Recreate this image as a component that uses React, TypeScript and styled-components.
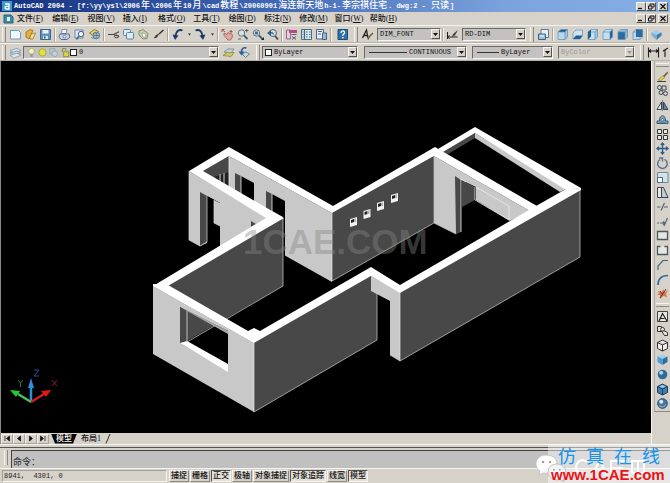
import React from "react";
import styled, { createGlobalStyle, css } from "styled-components";

const face = "#d6d2ca";
const light = "#f6f4ee";
const shade = "#8c8982";

const Global = createGlobalStyle`
  * { box-sizing: border-box; }
  html, body, #root { height: 100%; }
  body { margin: 0; overflow: hidden; background: ${face}; }
  button, select, input { font: inherit; color: inherit; margin: 0; padding: 0; border-radius: 0; }
`;

const mono = `"Liberation Mono", "Noto Sans CJK SC", monospace`;
const song = `"Liberation Serif", "Noto Sans CJK SC", serif`;

const Window = styled.div`
  position: relative;
  display: flex;
  flex-direction: column;
  height: 100vh;
  background: ${face};
  color: #222;
  font-family: ${song};
  font-size: 8px;
  line-height: 10px;
  overflow: hidden;
  white-space: nowrap;
`;

const TitleBar = styled.header`
  display: flex;
  align-items: center;
  flex: none;
  height: 12px;
  padding: 0 2px;
  gap: 2px;
  background: linear-gradient(90deg, #14307e 0%, #3f66b4 40%, #7ba2dc 75%, #86aee6 100%);
`;

const Title = styled.h1`
  flex: 1;
  margin: 0;
  font: bold 7px/12px ${mono};
  color: #fff;
  white-space: pre;
`;

const Han = styled.span`
  margin: 0 1px;
  font-size: 9px;
  font-weight: 500;
`;

const Controls = styled.div`
  display: flex;
  flex: none;
  button:last-child { margin-left: 2px; }
`;

const ControlButton = styled.button`
  display: flex;
  width: 10px;
  height: 9px;
  border: 1px solid;
  border-color: ${light} #55534e #55534e ${light};
  background: ${face};
  svg { width: 8px; height: 7px; }
`;

const MenuBar = styled.nav`
  display: flex;
  align-items: center;
  justify-content: space-between;
  flex: none;
  height: 13px;
  padding: 0 2px 0 3px;
`;

const MenuLead = styled.div`
  display: flex;
  align-items: center;
  gap: 3px;
`;

const MenuList = styled.div`
  display: grid;
  grid-template-columns: repeat(11, 1fr);
  width: 388px;
`;

const MenuItem = styled.button`
  border: 0;
  background: none;
  text-align: left;
  font-weight: 500;
  color: #111;
`;

const Bar = styled.div`
  display: flex;
  align-items: center;
  flex: none;
  height: 18px;
  border-top: 1px solid ${light};
  border-bottom: 1px solid #b5b1a9;
  overflow: hidden;
`;

const Grip = styled.span<{ $across?: boolean }>`
  flex: none;
  ${(p) =>
    p.$across
      ? css`
          width: 13px;
          height: 4px;
          margin: 2px 0 2px 1px;
          border-top: 1px solid ${light};
          border-bottom: 1px solid ${shade};
        `
      : css`
          width: 4px;
          height: 15px;
          margin: 0 2px;
          border-left: 1px solid ${light};
          border-right: 1px solid ${shade};
        `}
`;

const Separator = styled.span`
  flex: none;
  width: 2px;
  height: 13px;
  margin: 0 1px;
  border-left: 1px solid #aaa69e;
  border-right: 1px solid ${light};
`;

const Spacer = styled.span<{ $w: number }>`
  flex: none;
  width: ${(p) => p.$w}px;
`;

const ToolButton = styled.button`
  display: flex;
  align-items: center;
  justify-content: center;
  flex: none;
  width: 15px;
  height: 14px;
  border: 0;
  background: none;
  svg { width: 13px; height: 13px; flex: none; }
`;

const HistoryButton = styled(ToolButton)`
  width: 8px;
`;

const Combo = styled.label<{ $w: number; $off?: boolean }>`
  display: flex;
  align-items: center;
  flex: none;
  width: ${(p) => p.$w}px;
  height: 13px;
  padding-left: 2px;
  border: 1px solid;
  border-color: #6b6963 ${light} ${light} #6b6963;
  background: ${(p) => (p.$off ? "#cfccc4" : "#c3c2c0")};
  color: ${(p) => (p.$off ? "#a09d96" : "#111")};
  font: 7px/11px ${mono};
  svg { flex: none; }
  select {
    flex: 1;
    min-width: 0;
    width: 0;
    height: 11px;
    border: 0;
    background: transparent;
    appearance: none;
    outline: 0;
    opacity: 1;
  }
`;

const ComboArrow = styled.span`
  display: flex;
  align-items: center;
  justify-content: center;
  flex: none;
  width: 9px;
  height: 10px;
  border: 1px solid;
  border-color: ${light} #55534e #55534e ${light};
  background: ${face};
  pointer-events: none;
`;

const LineSample = styled.span<{ $w: number }>`
  flex: none;
  width: ${(p) => p.$w}px;
  height: 1px;
  margin: 0 2px;
  background: #333;
`;

const Swatch = styled.span`
  flex: none;
  width: 7px;
  height: 7px;
  margin-right: 2px;
  border: 1px solid #222;
  background: #fff;
`;

const Workspace = styled.main`
  display: flex;
  flex: 1;
  min-height: 0;
`;

const Document = styled.section`
  display: flex;
  flex-direction: column;
  flex: 1;
  min-width: 0;
  border-left: 1px solid ${shade};
  border-right: 1px solid ${light};
`;

const Viewport = styled.div`
  flex: 1;
  min-height: 0;
  background: #000;
  svg { display: block; width: 100%; height: 100%; }
`;

const SheetTabs = styled.div`
  display: flex;
  align-items: center;
  flex: none;
  height: 11px;
`;

const NavButton = styled.button`
  display: flex;
  align-items: center;
  justify-content: center;
  width: 12px;
  height: 10px;
  border: 1px solid;
  border-color: ${light} #a5a29a #a5a29a ${light};
  background: ${face};
  svg { width: 8px; height: 7px; }
`;

const SheetTab = styled.button<{ $active?: boolean }>`
  width: ${(p) => (p.$active ? 26 : 28)}px;
  height: 10px;
  margin-left: ${(p) => (p.$active ? 2 : 0)}px;
  border: 0;
  line-height: 10px;
  font-weight: 500;
  clip-path: ${(p) => (p.$active ? "polygon(0 0, 100% 0, calc(100% - 4px) 100%, 4px 100%)" : "none")};
  background: ${(p) => (p.$active ? "#000" : "none")};
  color: ${(p) => (p.$active ? "#fff" : "#111")};
`;

const SidePanel = styled.aside`
  display: flex;
  flex-direction: column;
  flex: none;
  width: 18px;
  padding-left: 2px;
`;

const Dock = styled.div`
  display: flex;
  flex-direction: column;
  flex: none;
  border-left: 1px solid #b0aca4;
  border-bottom: 1px solid ${shade};
`;

const ToolStack = styled.div<{ $h: number }>`
  display: grid;
  grid-auto-rows: 1fr;
  align-items: center;
  height: ${(p) => p.$h}px;
`;

const CommandArea = styled.form`
  display: flex;
  flex: none;
  height: 25px;
  border-top: 1px solid ${light};
  padding-top: 2px;
`;

const CommandFrame = styled.div`
  display: flex;
  flex: 1;
  border-top: 1px solid #55534e;
  padding: 2px 0 0 2px;
  border-bottom: 1px solid ${light};
`;

const CommandBox = styled.label`
  display: flex;
  align-items: flex-end;
  flex: 1;
  margin-left: 1px;
  border-left: 1px solid #44423e;
  border-top: 1px solid #44423e;
  background: #c0c0c0;
  font: 9px/11px ${song};
  padding-left: 1px;
  input {
    flex: 1;
    border: 0;
    height: 11px;
    outline: 0;
    background: transparent;
  }
`;

const StatusBar = styled.footer`
  display: flex;
  align-items: center;
  gap: 1px;
  flex: none;
  height: 14px;
  padding: 0 2px;
`;

const Coordinates = styled.output`
  width: 165px;
  height: 12px;
  margin-right: 1px;
  padding-left: 1px;
  border: 1px solid;
  border-color: #a29f97 ${light} ${light} #a29f97;
  white-space: pre;
  font: 7px/11px ${mono};
`;

const Toggle = styled.button<{ $wide?: boolean }>`
  width: ${(p) => (p.$wide ? 36 : 20)}px;
  height: 12px;
  border: 1px solid;
  border-color: ${light} #8c8982 #8c8982 ${light};
  background: ${face};
  line-height: 10px;
  font-weight: 500;
  color: #111;
  &[aria-pressed="true"] {
    border-color: #55534e ${light} ${light} #55534e;
    background: #e4e1da;
  }
`;

const Badge = styled.div`
  position: absolute;
  right: 0;
  bottom: 0;
  display: flex;
  flex-direction: column;
  align-items: flex-start;
  width: 122px;
  height: 39px;
  padding-left: 3px;
  background: rgba(255, 255, 255, 0.45);
`;

const BadgeLogo = styled.div`
  position: absolute;
  left: -13px;
  top: 9px;
  svg { display: block; width: 124px; height: 30px; }
`;

const BadgeName = styled.div`
  position: relative;
  display: flex;
  gap: 10px;
  padding-left: 7px;
  font: 18px/22px "Noto Sans CJK SC", sans-serif;
  color: #1496f0;
`;

const BadgeLink = styled.a`
  position: relative;
  font: bold 15px/17px "Liberation Sans", sans-serif;
  color: #e8141c;
  text-decoration: none;
`;

type Draw = React.ReactNode;
const ink = "#3b4652";
const blue = "#3f7fb4";
const pale = "#dcecf6";

const lens = (
  <>
    <circle cx="5.500" cy="5" r="3.200" fill="#d3e2ea" stroke="#66727c" />
    <path d="M8 7.500l3.500 3.500" stroke="#3c5c80" strokeWidth="1.800" />
  </>
);

const cube = (top: string, left: string, right: string) => (
  <>
    <path d="M2 4L5 1.500H11.500L9 4Z" fill={top} />
    <path d="M2 4H9V11.500H2Z" fill={left} />
    <path d="M9 4L11.500 1.500V9L9 11.500Z" fill={right} />
    <path d="M2 4L5 1.500H11.500V9L9 11.500H2ZM2 4H9V11.500M9 4L11.500 1.500" fill="none" stroke="#5d8fb8" strokeWidth=".7" />
  </>
);

const icons: Record<string, Draw> = {
  new: <path d="M1.500 2.500h8l2 2v6.500h-10z" fill="#edf6fa" stroke="#6f9bb5" />,
  open: (
    <>
      <path d="M2 4l4-2.500 3 1-4 8.500-3-2z" fill="#e2b23a" stroke="#94701e" strokeWidth=".8" />
      <path d="M6 11c0-4 1-5.500 5.500-6l-2.500 6z" fill="#f4dc82" stroke="#94701e" strokeWidth=".7" />
    </>
  ),
  save: (
    <>
      <path d="M1.500 1.500h10v10h-10z" fill="#5f93bf" stroke="#3b6790" />
      <path d="M3.500 2h6v3.500h-6z" fill="#e9f1f5" />
      <path d="M4 8h5v3H4z" fill="#d5e3ea" />
      <path d="M5 8.500h1.500v2H5z" fill="#345" />
    </>
  ),
  print: (
    <>
      <path d="M4 1.500h5l-1 4H3.500z" fill="#eef4fa" stroke="#6878a0" strokeWidth=".8" />
      <path d="M2 6h9l1 3-3 2.500H3L1 9z" fill="#c9d3ea" stroke="#50608c" strokeWidth=".9" />
      <circle cx="6.500" cy="8.700" r="1.400" fill="#eef" stroke="#50608c" strokeWidth=".7" />
    </>
  ),
  preview: (
    <>
      <path d="M2 2h8v8H2z" fill="#dbe9f7" stroke="#5b7ea8" strokeWidth=".9" />
      <circle cx="8" cy="6" r="2.700" fill="#eaf4fb" stroke="#4b6488" />
      <path d="M6 8l-2.500 3.500" stroke="#4b6488" strokeWidth="1.500" />
    </>
  ),
  publish: (
    <>
      <path d="M1.500 5l5-3.500 4 2-4 5z" fill="#e8cf5c" stroke="#7b6b26" strokeWidth=".8" />
      <circle cx="8.300" cy="7.500" r="3.300" fill="#9cc4d6" stroke="#49637c" strokeWidth=".9" />
      <path d="M6 7.500h5M8.300 5v5M3 9l2.500 2" stroke="#49637c" strokeWidth=".7" />
    </>
  ),
  cut: (
    <>
      <path d="M1 6.500h6M7 6.300l5-2.500M7 6.600l5 1.500" stroke="#444" strokeWidth="1.100" />
      <ellipse cx="9.500" cy="8.500" rx="2.200" ry="1.200" fill="none" stroke="#444" />
    </>
  ),
  copy: (
    <>
      <rect x="1.500" y="1.500" width="7" height="6" rx="1" fill={pale} stroke="#5585a3" />
      <rect x="4.500" y="4.500" width="7" height="6.500" rx="1" fill={pale} stroke="#5585a3" />
    </>
  ),
  paste: (
    <>
      <path d="M2 3l4-1.500 5 4-1 5-4 .5-4-4z" fill="#c9cfa4" stroke="#85906d" />
      <path d="M5 4.500l4 2-.5 3-3-.5z" fill="#eef2f0" stroke="#8a9a9a" strokeWidth=".7" />
    </>
  ),
  brush: (
    <>
      <path d="M11.500 2L7 6" stroke="#333" strokeWidth="1.500" />
      <path d="M7.500 5.500L5 9.500l-3.500 1L4 7z" fill="#4a3a2c" />
    </>
  ),
  undo: (
    <>
      <path d="M11.500 2.500C8 1 5 3 4.500 8" fill="none" stroke="#173a68" strokeWidth="1.900" />
      <path d="M1.500 6.500l6 1L4 12z" fill="#173a68" />
    </>
  ),
  redo: (
    <>
      <path d="M1.500 2.500C5 1 8 3 8.500 8" fill="none" stroke="#173a68" strokeWidth="1.900" />
      <path d="M11.500 6.500l-6 1L9 12z" fill="#173a68" />
    </>
  ),
  dot: <path d="M5 5.500h3L6.500 7.500z" fill="#222" />,
  pan: (
    <>
      <path d="M3 5l3 1.500 1-2 2 1 2 .5.5 3-2 3H7L3 7.500z" fill="#e0a8a0" stroke="#a8665e" strokeWidth=".9" />
      <path d="M1 1.500l3 2.500M1 1.500v2.500M1 1.500h2.500M10 2v3M8.500 3.500h3" stroke="#a84a50" />
    </>
  ),
  zoom: (
    <>
      {lens}
      <path d="M9 2.500h3.500M10.700 1v3.300M2 11h3" stroke="#555" strokeWidth=".9" />
    </>
  ),
  zoomWindow: (
    <>
      {lens}
      <path d="M4 3.500h3v3H4z" fill="#3f6f98" />
      <path d="M10 12h3v-3z" fill="#222" />
    </>
  ),
  zoomPrevious: (
    <>
      <circle cx="7" cy="5" r="3.500" fill="#cfdfe8" stroke="#56626e" />
      <path d="M9 8l3 3.500" stroke="#444" strokeWidth="1.800" />
      <path d="M1 5l4-3v2c2 0 3 1 3 3-1-1.500-2-1.500-3-1.500V8z" fill="#2c5c90" />
    </>
  ),
  properties: (
    <>
      <path d="M1.500 2h4v9h-4z" fill="#e4cfe0" stroke="#8a4a80" strokeWidth=".8" />
      <path d="M4 2h8v3H4z" fill="#b04c88" />
      <path d="M6.500 6.500h5M7 8.500l4 3M11 8.500l-4 3" stroke="#665a70" />
    </>
  ),
  design: (
    <>
      <path d="M1.500 1.500h10v10h-10z" fill="#dce9ec" stroke="#4a6c84" />
      <path d="M4.500 2v9M6 4h1.500M9 4h1.500M6 6.500h1.500M9 6.500h1.500M6 9h1.500M9 9h1.500M2.500 4h1M2.500 6.500h1M2.500 9h1" stroke="#3a6c8a" strokeWidth="1.200" />
    </>
  ),
  palettes: (
    <>
      <path d="M1.500 1.500h7v9.500h-7z" fill="#e4eef7" stroke="#4c6288" />
      <path d="M3 3.500h4M3 6h3M7.500 5h4v6.500h-4z" fill="#9cb6d6" stroke="#4c6288" />
    </>
  ),
  help: (
    <>
      <path d="M2 1.500h9.500v10H2z" fill="#2f70a8" stroke="#1b4c78" />
      <path d="M5 5c0-3 4-2.500 3.500-.2C8.300 6 6.800 6 6.800 7.800M6.800 9v1.400" fill="none" stroke="#fff" strokeWidth="1.300" />
    </>
  ),
  textStyle: (
    <>
      <path d="M1.500 10L5.500 2l1.500 8M3 7.500h4" fill="none" stroke="#222" strokeWidth="1.300" />
      <path d="M12 5l-4 4-1 2.500" fill="none" stroke="#6c5a2a" strokeWidth="1.400" />
    </>
  ),
  dimStyle: (
    <>
      <path d="M1.500 4v7M1.500 9h10M3.500 7.500L1.500 9l2 1.500" fill="none" stroke="#222" />
      <path d="M12 2L7 6l-1 3 3-1.500z" fill="#4c473e" />
    </>
  ),
  views: (
    <>
      <path d="M4 1.500h7.500v8H4z" fill="#e8f1f7" stroke="#607890" />
      <path d="M1.500 6h7v5.500h-7z" fill="#9fc0d8" stroke="#3e6284" />
      <path d="M3 8h4" stroke="#fff" />
    </>
  ),
  top: cube("#1f5d94", "#b9d8ec", "#9cc5e0"),
  bottom: (
    <>
      <path d="M2 5L5 2h6.500v6L9 11H2z" fill="#cfe3ef" stroke="#5d8fb8" strokeWidth=".7" />
      <path d="M2 11l3-3.500h6.500L9 11z" fill="#1f5d94" />
    </>
  ),
  left: (
    <>
      {cube("#c4dff0", "#c4dff0", "#9cc5e0")}
      <path d="M2 4l3-2.500v7L2 11.500z" fill="#1f5d94" />
    </>
  ),
  right: cube("#c4dff0", "#c4dff0", "#1f5d94"),
  front: cube("#8dbbdc", "#2a6ba2", "#8dbbdc"),
  back: (
    <>
      {cube("#bcd9ec", "#bcd9ec", "#bcd9ec")}
      <path d="M5 1.500h6.500V9H5z" fill="#2a6ba2" />
    </>
  ),
  iso: (
    <>
      <path d="M1.500 4.500L6.500 2l5 2.500v3L6.500 12l-5-4.500z" fill="#a6cce4" />
      <path d="M6.500 7l5-2.500v3L6.500 12z" fill="#3c7eb0" />
      <path d="M1.500 4.500L6.500 7v5l-5-4.500z" fill="#7bb0d4" />
    </>
  ),
  layers: (
    <>
      <path d="M1 4.500L8 2.500l4 2-7 2.500z" fill="#dbe8ee" stroke="#76909e" strokeWidth=".7" />
      <path d="M1 7L8 5l4 2-7 2.500z" fill="#c3d7e1" stroke="#76909e" strokeWidth=".7" />
      <path d="M1 9.300l7-2 4 2L5 12z" fill="#dbe8ee" stroke="#76909e" strokeWidth=".7" />
    </>
  ),
  layerCurrent: (
    <>
      <path d="M1 9.500l4-3h7l-3 4z" fill="#dccb5a" stroke="#8c8236" strokeWidth=".8" />
      <path d="M2 6l4-3h6l-3 4z" fill="#c0d6cf" stroke="#71898f" strokeWidth=".8" />
    </>
  ),
  layerPrevious: (
    <>
      <path d="M5 8l4-2 3.500 2-4 3.500z" fill="#c5dae8" stroke="#4c6c8c" strokeWidth=".8" />
      <path d="M9.500 2C6 1 4.500 3 4.500 6" fill="none" stroke="#2f5f96" strokeWidth="1.700" />
      <path d="M1.500 5.500h6L4.500 9.500z" fill="#2f5f96" />
    </>
  ),
  dimLinear: <path d="M1.500 1.500v10M11.500 1.500v10M2 5h9M4 3.500L2 5l2 1.500M9 3.500L11 5 9 6.500" fill="none" stroke="#222" strokeWidth="1.100" />,
  dimAligned: <path d="M1 5l5-3M1 5l3 0M3 6v5M9 2v5" fill="none" stroke="#222" strokeWidth="1.200" />,
  erase: (
    <>
      <path d="M1 11.500h9" stroke="#444" />
      <path d="M11.500 1.500L7 6l1.500 1L12 3z" fill="#6c5a3c" />
      <path d="M6.500 6L2 10l3 .5 4-3.500z" fill="#e6d34c" stroke="#7c7430" strokeWidth=".6" />
    </>
  ),
  duplicate: (
    <g fill="none" stroke={ink}>
      <circle cx="3.500" cy="3.500" r="2" />
      <path d="M6 2h4v4H6z" />
      <circle cx="5" cy="8.500" r="2" />
      <circle cx="9.500" cy="9.500" r="2" />
    </g>
  ),
  mirror: (
    <>
      <path d="M5.500 3v7.500H1z" fill="#e8edf0" stroke={ink} />
      <path d="M7.500 3v7.500H12z" fill="#5f88a8" stroke={ink} />
      <path d="M6.500 1v11" stroke={ink} strokeWidth=".6" />
    </>
  ),
  offset: (
    <>
      <path d="M1 10.500h11V8H9.500C10 1 3 1 3.500 8H1z" fill="#82a6bf" stroke="#3c5b74" />
      <path d="M3 10h7M5 8c0-3.500 3-3.500 3 0z" fill="#dbe8ee" stroke="#3c5b74" strokeWidth=".8" />
    </>
  ),
  array: <path d="M1.500 1.500h4v4h-4zM7.500 1.500h4v4h-4zM1.500 7.500h4v4h-4zM7.500 7.500h4v4h-4z" fill="#ece9e2" stroke="#333" />,
  move: <path d="M6.500 1v11M1 6.500h11M4.800 3l1.700-2 1.700 2M4.800 10l1.700 2 1.700-2M3 4.800L1 6.500l2 1.700M10 4.800l2 1.700-2 1.700" fill="none" stroke="#2d5e90" strokeWidth="1.300" />,
  rotate: <path d="M4 2.500A4.800 4.800 0 1 0 8.500 2.300M3 1h3.500v3.500" fill="none" stroke="#55738c" strokeWidth="1.400" />,
  scale: (
    <>
      <path d="M1.500 1.500h10.500v10H1.500z" fill="#d3e2e8" stroke="#6b909c" />
      <path d="M1.500 6.500h5v5h-5z" fill="#fff" stroke="#47707c" />
    </>
  ),
  stretch: (
    <>
      <path d="M1.500 1.500h4v10h-4z" fill="#ece9e2" stroke={ink} />
      <path d="M5.500 1.500h2l4.500 10H5.500z" fill="#b8ced8" stroke={ink} />
    </>
  ),
  trim: <path d="M1 7h3.500M8 7h4M8.500 3L5 10.500" stroke="#556472" strokeWidth="1.200" />,
  extend: <path d="M1 8h2M4 8h5M11.500 3L8 11M7 6.500L9 8 7 9.500" fill="none" stroke="#556472" strokeWidth="1.200" />,
  breakPoint: <path d="M1.500 2.500h10v8h-10z" fill="#e8e6df" stroke="#4a5862" strokeWidth="1.300" />,
  breakGap: <path d="M4.500 2.500h-3v8h10v-8h-3" fill="#e8e6df" stroke="#4a5862" strokeWidth="1.300" />,
  chamfer: <path d="M2 12V8L7 2.500h5" fill="none" stroke="#4b6276" strokeWidth="1.200" />,
  fillet: <path d="M2 12C2 6 5 2.500 12 2.500" fill="none" stroke="#2f6c9c" strokeWidth="1.600" />,
  explode: (
    <>
      <path d="M2 4l4 1 1-3 2 3 3-2-2 4 1 3-4-1-3 3V8L1 8l2-2z" fill="#d87848" />
      <path d="M4 11l6-9M4 4l3 4" stroke="#6c3030" />
    </>
  ),
  textWindow: (
    <>
      <path d="M1.500 1.500h10v10h-10z" fill="#e8e6df" stroke="#444" />
      <path d="M3 11l3.500-7.500L11 11M4.500 8.500h4" fill="none" stroke="#222" strokeWidth="1.200" />
    </>
  ),
  wire2: (
    <g fill="#e8e6df" stroke="#333">
      <path d="M1.500 2.500h4v5h-4z" />
      <circle cx="6.500" cy="5.500" r="2" />
      <path d="M5.500 7h3l3 1.500v3h-3z" />
    </g>
  ),
  wire3: <path d="M6.500 1l5 2.500v6l-5 2.500-5-2.500v-6zM1.500 3.500l5 2.500 5-2.500M6.500 6v6" fill="#efede8" stroke="#333" />,
  hidden: (
    <>
      <path d="M1.500 3.500L6.500 1.500l5 2-5 2.500z" fill="#9ed0ee" />
      <path d="M1.500 3.500l5 2.500v6l-5-3z" fill="#4a9bd0" />
      <path d="M11.500 3.500l-5 2.500v6l5-3z" fill="#2670a8" />
    </>
  ),
  flat: (
    <>
      <circle cx="6.500" cy="6.500" r="4.800" fill="#2e6b98" />
      <circle cx="5.200" cy="4.800" r="2" fill="#a8d2ea" />
    </>
  ),
  flatEdges: (
    <>
      <path d="M6.500 1l5 2.500v6l-5 2.500-5-2.500v-6z" fill={blue} stroke="#1c3f5e" />
      <path d="M1.500 3.500l5 2.500 5-2.500M6.500 6v6" fill="none" stroke="#1c3f5e" />
      <path d="M3 3.500l3.500-1.500L10 3.500 6.500 5z" fill="#a7cbe2" />
    </>
  ),
  gouraud: (
    <>
      <circle cx="6.500" cy="6.500" r="4.800" fill="#4678a4" stroke="#25486c" />
      <path d="M3 8.500c2 2 5 2 7-1" fill="none" stroke="#b8d0e4" strokeWidth=".8" />
      <circle cx="5.200" cy="4.800" r="2" fill="#d6e8f4" />
    </>
  ),
  bulb: (
    <>
      <circle cx="6.500" cy="5" r="3.300" fill="#f5f4c0" stroke="#a6a468" strokeWidth=".8" />
      <path d="M5 8.500h3v3H5z" fill="#8e969c" />
    </>
  ),
  sun: <circle cx="6.500" cy="6.500" r="4.300" fill="#dfe23a" stroke="#a3a63a" strokeWidth="1" />,
  freeze: (
    <>
      <path d="M2 2h6v6H2z" fill="#b9c6cb" stroke="#94a4ac" />
      <circle cx="8" cy="8" r="3.300" fill="#c3d2d6" stroke="#8fa4ae" />
    </>
  ),
  lock: (
    <>
      <path d="M4 6V3c0-2 4-2 4 0v1" fill="none" stroke="#8a8a3a" strokeWidth="1.200" />
      <path d="M5.500 5.500h6v6h-6z" fill="#d9d547" stroke="#86843a" />
    </>
  ),
};

const Glyph = ({ name, size }: { name: string; size?: number }) => (
  <svg viewBox="0 0 13 13" width={size} height={size} fill="none" aria-hidden="true">
    {icons[name]}
  </svg>
);

const Tools = ({ names }: { names: string[] }) => (
  <>
    {names.map((n) => (
      <ToolButton key={n} type="button" aria-label={n}>
        <Glyph name={n} />
      </ToolButton>
    ))}
  </>
);

const Picker = ({ label, value, width, off, children }: { label: string; value: string; width: number; off?: boolean; children?: React.ReactNode }) => (
  <Combo $w={width} $off={off}>
    {children}
    <select aria-label={label} disabled={off} defaultValue={value}>
      <option>{value}</option>
    </select>
    <ComboArrow>
      <svg width="5" height="3" viewBox="0 0 5 3" aria-hidden="true">
        <path d="M0 0h5L2.500 3z" fill={off ? "#a09d96" : "#111"} />
      </svg>
    </ComboArrow>
  </Combo>
);

const WindowControls = () => (
  <Controls>
    <ControlButton type="button" aria-label="Minimize">
      <svg viewBox="0 0 8 7"><path d="M1 5.500h4" stroke="#111" strokeWidth="1.300" /></svg>
    </ControlButton>
    <ControlButton type="button" aria-label="Restore">
      <svg viewBox="0 0 8 7"><path d="M3 3V1h4v3H5.500M1.500 3h3.500v3H1.500z" fill="none" stroke="#111" /></svg>
    </ControlButton>
    <ControlButton type="button" aria-label="Close">
      <svg viewBox="0 0 8 7"><path d="M1.500 1l5 5M6.500 1l-5 5" stroke="#111" strokeWidth="1.200" /></svg>
    </ControlButton>
  </Controls>
);

const AppIcon = () => (
  <svg width="10" height="10" viewBox="0 0 10 10" aria-hidden="true">
    <rect width="10" height="10" fill="#3c9ac4" />
    <path d="M3 3h4v5H4.500C2.500 8 2.500 5.300 4.500 5.300H7" fill="none" stroke="#fff" strokeWidth="1.300" />
  </svg>
);

const DrawingIcon = () => (
  <svg width="11" height="11" viewBox="0 0 11 11" aria-hidden="true">
    <path d="M1 2h7l2 2v6H1z" fill="#3b8ca8" stroke="#2c5c70" />
    <path d="M4 4h3v4H4z" fill="#e4f2f6" />
  </svg>
);

const menus = [
  ["文件", "F"], ["编辑", "E"], ["视图", "V"], ["插入", "I"], ["格式", "O"], ["工具", "T"],
  ["绘图", "D"], ["标注", "N"], ["修改", "M"], ["窗口", "W"], ["帮助", "H"],
];

const toggles: [string, boolean][] = [
  ["捕捉", false], ["栅格", false], ["正交", true], ["极轴", false],
  ["对象捕捉", false], ["对象追踪", true], ["线宽", false], ["模型", true],
];

const navs = [
  "M2 1v5M6.500 1v5L3.500 3.500z",
  "M5.500 1v5L2.500 3.500z",
  "M2.500 1v5l3-2.500z",
  "M6 1v5M1.500 1v5l3-2.500z",
];

const HousePlan = () => {
  const W = "#fff";
  const L = "#c8c8c8";
  const D = "#484848";
  return (
    <svg viewBox="1 61 650 372" preserveAspectRatio="xMinYMin slice" role="img" aria-label="House model">
      {/* terrace */}
      <path d="M443 152L475 133V138L448 154Z" fill={D} />
      <path d="M475 133L566 189L560 192L475 138Z" fill={L} />
      <path d="M438 149L475 127L581 188L566 190L475 133L443 152Z" fill={W} />
      {/* living room end wall */}
      <path d="M434 156L530 211L510 221L476 200V187L461 180V231L456 234L434 223Z" fill={L} />
      <path d="M455 176L461 180V232L456 234Z" fill={D} />
      <path d="M462 180L475 187V200L462 207Z" fill={D} />
      <path d="M461 232V179L466 182M476 187L509 206V220M475 187V200L509 220" fill="none" stroke="#eee" strokeWidth=".8" />
      <path d="M434 223L456 234" stroke="#ddd" strokeWidth=".6" />
      {/* long wall */}
      <path d="M332 213L434 156V223L332 281Z" fill={D} />
      <path d="M332 281L434 223V156" fill="none" stroke="#bbb" strokeWidth=".8" />
      {[[350, 217], [363.500, 209], [377, 201], [391, 193]].map(([x, y]) => (
        <g key={x}>
          <path d={`M${x} ${y + 2}l7-2v8l-7 2z`} fill="#f2f2f2" />
          <path d={`M${x + 1} ${y + 3}l3-1v3l-3 1z`} fill="#222" />
          <path d={`M${x + 4} ${y + 2}l2-1v4h-2z`} fill="#b0b0b0" />
        </g>
      ))}
      {/* upper left room */}
      <path d="M229 156L332 213V282L284 255V218Z" fill={L} />
      <path d="M203 171L229 156V188Z" fill={D} />
      <path d="M214 177L229 172V187Z" fill="#222" />
      <path d="M220 174V184M224 173V186" stroke="#999" strokeWidth="1.500" />
      <path d="M229 156V188L284 219V200Z" fill={L} />
      <path d="M241 176L254 183V202L241 194Z" fill="#000" />
      <path d="M235 173L241 176V194L235 190Z" fill={D} />
      <path d="M266 191L272 194V212L266 208Z" fill={D} />
      <path d="M272 194L285 201V256H283V217L272 211Z" fill="#000" />
      <path d="M241 176V194M272 194V211M229 156V186" stroke="#eee" strokeWidth=".8" />
      <path d="M189 171L267 218L220 247V203L207 196V243L200 246L189 240Z" fill={L} />
      <path d="M200 192L207 196V242L200 246Z" fill={D} />
      <path d="M207 196L220 203V246L207 242Z" fill="#000" />
      <path d="M214 200L220 203V226L214 223Z" fill={L} />
      <path d="M214 200V223L220 226M207 196V242L200 246L189 240V171" fill="none" stroke="#ddd" strokeWidth=".7" />
      <path d="M251 221L256 224L251 227Z" fill={D} />
      {/* left lower room, rear wall */}
      <path d="M283 218V286L168 352V286Z" fill={D} />
      <path d="M283 218V286L170 352" fill="none" stroke="#bbb" strokeWidth=".8" />
      <path fillRule="evenodd" d="M189 171L229 147L333 206L435 147L537 206L530 211L434 156L332 213L229 156L203 171L284 218L168 286L254 335V343L153 286L266 218Z" fill={W} />
      {/* front left face with window */}
      <path fillRule="evenodd" d="M153 286L254 343V412L153 354ZM180 307V343L228 371V331Z" fill={L} />
      <path d="M180 307L187 311V341L180 343Z" fill={D} />
      <path d="M180 307L228 331V334L187 311Z" fill="#aaa" />
      <path d="M187 341L228 364V372L180 343Z" fill={W} />
      <path d="M187 311V341" stroke="#ddd" strokeWidth=".8" />
      {/* front right face */}
      <path d="M254 343L371 276L377 281V340L254 412Z" fill={D} />
      <path d="M377 292V340L254 412" fill="none" stroke="#bbb" strokeWidth=".8" />
      <path d="M371 276L400 292V361L390 355V301L371 291Z" fill={L} />
      <path d="M400 292L580 189V257L400 361Z" fill={D} />
      <path d="M580 189V257L400 361L390 355" fill="none" stroke="#bbb" strokeWidth=".8" />
      <path d="M168 285L248 331L254 328L260 331L371 267L400 285L536 206L566 189L581 188V190L400 293L371 276L254 343L153 286V284Z" fill={W} />
      <path d="M254 343V412M400 293V361M332 213V281" stroke="#e4e4e4" strokeWidth=".7" />
      <text x="243" y="254" fill="#858585" fillOpacity=".42" fontFamily="Liberation Sans, sans-serif" fontWeight="bold" fontSize="35">1CAE.COM</text>
      {/* axis tripod */}
      <g strokeWidth="2.500">
        <path d="M31 402V385" stroke="#2f8fd8" />
        <path d="M31 402L18 394" stroke="#49c455" />
        <path d="M31 402L44 394" stroke="#d42020" />
      </g>
      <path d="M31 378L34 388H28Z" fill="#2f8fe0" />
      <path d="M10 390L20 391L16 397Z" fill="#22cc33" />
      <path d="M51 390L41 391L46 397Z" fill="#e41818" />
      <g fill="none" strokeWidth="1">
        <path d="M34 370H39L34 376H39" stroke="#304a98" />
        <path d="M18 380L20.500 383L23 380M20.500 383V387" stroke="#2c8030" />
        <path d="M52 380L57 386M57 380L52 386" stroke="#882030" />
      </g>
    </svg>
  );
};

export default function App() {
  return (
    <Window>
      <Global />
      <TitleBar>
        <AppIcon />
        <Title>
          AutoCAD 2004 - [f:\yy\ysl\2006<Han>年</Han>\2006<Han>年</Han>10<Han>月</Han>\cad<Han>教程</Han>\20060901<Han>海连新天地</Han>h-1-<Han>李宗祺住宅</Han>. dwg:2 - <Han>只读</Han>]
        </Title>
        <WindowControls />
      </TitleBar>

      <MenuBar>
        <MenuLead>
          <DrawingIcon />
          <MenuList>
            {menus.map(([name, key]) => (
              <MenuItem key={key} type="button">
                {name}(<u>{key}</u>)
              </MenuItem>
            ))}
          </MenuList>
        </MenuLead>
        <WindowControls />
      </MenuBar>

      <Bar role="toolbar" aria-label="Standard">
        <Grip />
        <Tools names={["new", "open", "save"]} />
        <Separator />
        <Tools names={["print", "preview", "publish"]} />
        <Separator />
        <Tools names={["cut", "copy", "paste", "brush"]} />
        <Separator />
        <Tools names={["undo"]} />
        <HistoryButton type="button" aria-label="Undo list"><Glyph name="dot" /></HistoryButton>
        <Tools names={["redo"]} />
        <HistoryButton type="button" aria-label="Redo list"><Glyph name="dot" /></HistoryButton>
        <Separator />
        <Tools names={["pan", "zoom", "zoomWindow", "zoomPrevious"]} />
        <Separator />
        <Tools names={["properties", "design", "palettes"]} />
        <Separator />
        <Spacer $w={2} />
        <Tools names={["help"]} />
        <Spacer $w={2} />
        <Grip />
        <Tools names={["textStyle"]} />
        <Spacer $w={2} />
        <Picker label="Text style" value="DIM_FONT" width={64} />
        <Separator />
        <Tools names={["dimStyle"]} />
        <Spacer $w={2} />
        <Picker label="Dimension style" value="RD-DIM" width={64} />
        <Spacer $w={2} />
        <Grip />
        <Tools names={["views"]} />
        <Separator />
        <Tools names={["top", "bottom", "left", "right", "front", "back"]} />
        <Separator />
        <Tools names={["iso"]} />
      </Bar>

      <Bar role="toolbar" aria-label="Layers and properties">
        <Grip />
        <Tools names={["layers"]} />
        <Picker label="Layer" value="0" width={196}>
          <Glyph name="bulb" size={11} />
          <Glyph name="sun" size={11} />
          <Glyph name="freeze" size={11} />
          <Glyph name="lock" size={11} />
          <Swatch />
        </Picker>
        <Spacer $w={2} />
        <Tools names={["layerCurrent", "layerPrevious"]} />
        <Spacer $w={3} />
        <Grip />
        <Picker label="Color" value="ByLayer" width={96}>
          <Swatch />
        </Picker>
        <Spacer $w={6} />
        <Picker label="Linetype" value="CONTINUOUS" width={103}>
          <LineSample $w={38} />
        </Picker>
        <Spacer $w={5} />
        <Picker label="Lineweight" value="ByLayer" width={81}>
          <LineSample $w={22} />
        </Picker>
        <Spacer $w={5} />
        <Picker label="Plot style" value="ByColor" width={77} off />
        <Spacer $w={3} />
        <Grip />
        <Tools names={["dimLinear", "dimAligned"]} />
      </Bar>

      <Workspace>
        <Document>
          <Viewport>
            <HousePlan />
          </Viewport>
          <SheetTabs>
            {navs.map((d, i) => (
              <NavButton key={d} type="button" aria-label={["First", "Previous", "Next", "Last"][i]}>
                <svg viewBox="0 0 8 7"><path d={d} fill="#111" stroke="#111" strokeWidth=".7" /></svg>
              </NavButton>
            ))}
            <SheetTab type="button" $active>模型</SheetTab>
            <SheetTab type="button">布局1</SheetTab>
            <svg width="6" height="10" viewBox="0 0 6 10" aria-hidden="true"><path d="M5 0L1 9.500" stroke="#333" /></svg>
          </SheetTabs>
        </Document>
        <SidePanel>
          <Dock>
            <Grip $across />
            <ToolStack $h={232}>
              <Tools names={["erase", "duplicate", "mirror", "offset", "array", "move", "rotate", "scale", "stretch", "trim", "extend", "breakPoint", "breakGap", "chamfer", "fillet", "explode"]} />
            </ToolStack>
            <Grip $across />
            <ToolStack $h={102}>
              <Tools names={["textWindow", "wire2", "wire3", "hidden", "flat", "flatEdges", "gouraud"]} />
            </ToolStack>
          </Dock>
        </SidePanel>
      </Workspace>

      <CommandArea onSubmit={(e) => e.preventDefault()}>
        <CommandFrame>
          <Grip />
          <CommandBox>
            命令：
            <input type="text" />
          </CommandBox>
        </CommandFrame>
      </CommandArea>

      <StatusBar>
        <Coordinates>8941,  4301, 0</Coordinates>
        {toggles.map(([name, on]) => (
          <Toggle key={name} type="button" aria-pressed={on} $wide={name.length > 2}>
            {name}
          </Toggle>
        ))}
      </StatusBar>

      <Badge>
        <BadgeLogo>
          <svg viewBox="0 0 124 30" aria-hidden="true">
            <path d="M11 2C4 2 1 7 1 11c0 3 2 6 4 7l-1 4 4-2c8 1 14-3 14-9S17 2 11 2Z" fill="#fff" stroke="#b8b8b8" strokeWidth=".7" />
            <path d="M22 11c-6 0-9 4-9 8s4 8 9 8c1 0 2 0 3-.5l4 2-1-3c6-5 2-14.500-6-14.500Z" fill="#f4f4f4" stroke="#a8a8a8" strokeWidth=".7" />
            <path d="M7 8h2v2H7zM14 8h2v2h-2zM18 16h1.500v1.500H18zM24 16h1.500v1.500H24z" fill="#999" />
            <path d="M52 9c-8-7-16 7-7 12M58 22l7-16 6 16M60 16h9M76 22V8h16M76 15h12M97 8v12h12V8zM103 8v12" fill="none" stroke="#fff" strokeWidth="2" />
          </svg>
        </BadgeLogo>
        <BadgeName>
          <span>仿</span><span>真</span><span>在</span><span>线</span>
        </BadgeName>
        <BadgeLink href="http://www.1CAE.com">www.1CAE.com</BadgeLink>
      </Badge>
    </Window>
  );
}
